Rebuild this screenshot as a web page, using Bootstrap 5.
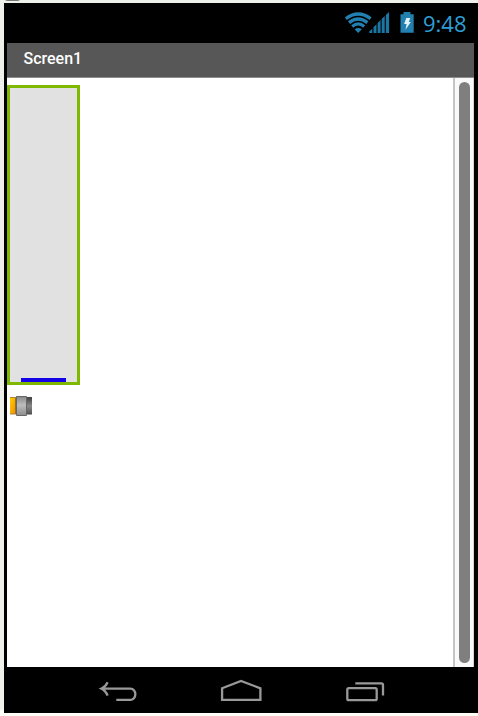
<!DOCTYPE html>
<html lang="en">
<head>
<meta charset="utf-8">
<meta name="viewport" content="width=device-width, initial-scale=1">
<title>Screen1</title>
<link href="https://cdn.jsdelivr.net/npm/bootstrap@5.3.0/dist/css/bootstrap.min.css" rel="stylesheet">
<style>
body{background:linear-gradient(#edf1ea 0 710px,#fdfcf5 710px);height:716px;overflow:hidden;font-family:Roboto,sans-serif}
.top-strip{height:3px;padding-left:5px}
.top-strip svg{display:block}
.phone{height:710px;margin-left:4px;background:#000;padding:0 4px 0 3px}
.status{height:40px;padding-right:7px}
.clock{font-family:"Open Sans","Noto Sans",sans-serif;font-size:22px;line-height:40px;color:#2d9fd6;width:44px;white-space:nowrap}
.signals{margin-right:2px;flex:none}
.title-bar{height:35px;background:#575757;border-bottom:1px solid #8d8d8d;padding:1px 0 3px 16.5px;color:#fff;font-size:16px;font-weight:500;line-height:30px}
.viewer{height:589px;background:#fff}
.canvas-area{padding-top:7px}
.arrangement{width:72.5px;height:300px;border:3px solid #7eb900;background:#e1e1e1}
.slider-bar{width:44.5px;height:4px;background:#1500ea;margin-left:11px}
.component{margin:10px 0 0 2px}
.track{width:21px;background:#f8f9f9;border-left:2px solid #c6c6c6;border-right:1px solid #d4d4d4;padding:4px 3px 4px 4px}
.thumb{background:#7f7f7f;width:11px;height:581px}
.soft-keys{height:46px}
</style>
</head>
<body>
<div class="top-strip"><svg width="16" height="3"><path d="M0 0h15q-1 1-3 1H3Q1 1 0 0" fill="#777"/></svg></div>
<main class="phone d-flex flex-column">
  <div class="status d-flex justify-content-end align-items-center">
    <svg class="signals" width="76" height="40" viewBox="345 3 76 40" aria-hidden="true">
      <g fill="none" stroke="#2180b0" stroke-width="3.3">
        <path d="M345.8 18.6Q358.2 9.4 370.6 18.6"/>
        <path d="M349 22.6Q358.2 15.4 367.4 22.6"/>
        <path d="M352.2 26.4Q358.2 21.4 364.2 26.4"/>
      </g>
      <path d="M354.6 29.200Q358.200 26.700 361.800 29.200L358.200 33z" fill="#2180b0"/>
      <path d="M369.300 33V31.500l3-2.800V33zM373.500 33v-5.800l3-3v8.800zM377.600 33V23l3-3v13zM381.700 33V19l3-3v17zM385.800 33V15l3.300-3V33z" fill="#1c76a3"/>
      <path d="M403.500 12h7v2.300h3.200v18.500H400.500V14.300h3z" fill="#2180b0"/>
      <path d="M406.300 18h4l-1.500 4h2l-5.300 7.700 1.100-5.600h-2.500z" fill="#e4f1f7"/>
    </svg>
    <span class="clock">9:48</span>
  </div>
  <header class="title-bar">Screen1</header>
  <section class="viewer d-flex">
    <div class="canvas-area flex-grow-1">
      <div class="arrangement d-flex flex-column justify-content-end">
        <div class="slider-bar"></div>
      </div>
      <svg class="component d-block" width="25" height="22" viewBox="9 395 25 22" aria-hidden="true">
        <defs>
          <linearGradient id="gold" x2="1" y2="1"><stop stop-color="#ffd100"/><stop offset="1" stop-color="#f18b00"/></linearGradient>
          <linearGradient id="silver" x2="0" y2="1"><stop stop-color="#858585"/><stop offset=".45" stop-color="#bdbdbd"/><stop offset="1" stop-color="#8b8b8b"/></linearGradient>
          <linearGradient id="steel" x2="0" y2="1"><stop stop-color="#444"/><stop offset=".5" stop-color="#888"/><stop offset="1" stop-color="#555"/></linearGradient>
        </defs>
        <path d="M10 398h6v16h-6z" fill="url(#gold)"/>
        <path d="M10 397.500h6M10 414h6" stroke="#a88539"/>
        <path d="M15 398h1v16h-1z" fill="#96712d"/>
        <path d="M27 398h5v16h-5z" fill="url(#steel)"/>
        <path d="M27 397.500h5M27 414h5" stroke="#484848"/>
        <path d="M16 396h11v20H16z" fill="url(#silver)"/>
        <path d="M17 396.500h9M17 415.500h9M16.500 397v18M26.500 397v18" stroke="#666"/>
      </svg>
    </div>
    <div class="track"><div class="thumb rounded-pill"></div></div>
  </section>
  <nav class="soft-keys">
    <svg class="d-block" width="467" height="46" viewBox="7 667 467 46" fill="none" stroke="#999" stroke-width="2.300" aria-label="Back, Home, Recent apps">
      <path d="M102 688.600h28.500a4.800 5.600 0 0 1 0 11.300H116.300M107.600 682.300Q105.500 687 101.500 688.600Q105.500 690.500 107.600 695.600"/>
      <path d="M222.100 688.300L241 681l19.400 7.300v11.500h-38.300z"/>
      <rect x="347.300" y="688.200" width="29.400" height="12" rx="1.500"/>
      <path d="M355.300 683.300h26q1.700 0 1.700 1.700v10.500"/>
    </svg>
  </nav>
</main>
<script src="https://cdn.jsdelivr.net/npm/bootstrap@5.3.0/dist/js/bootstrap.bundle.min.js"></script>
</body>
</html>
